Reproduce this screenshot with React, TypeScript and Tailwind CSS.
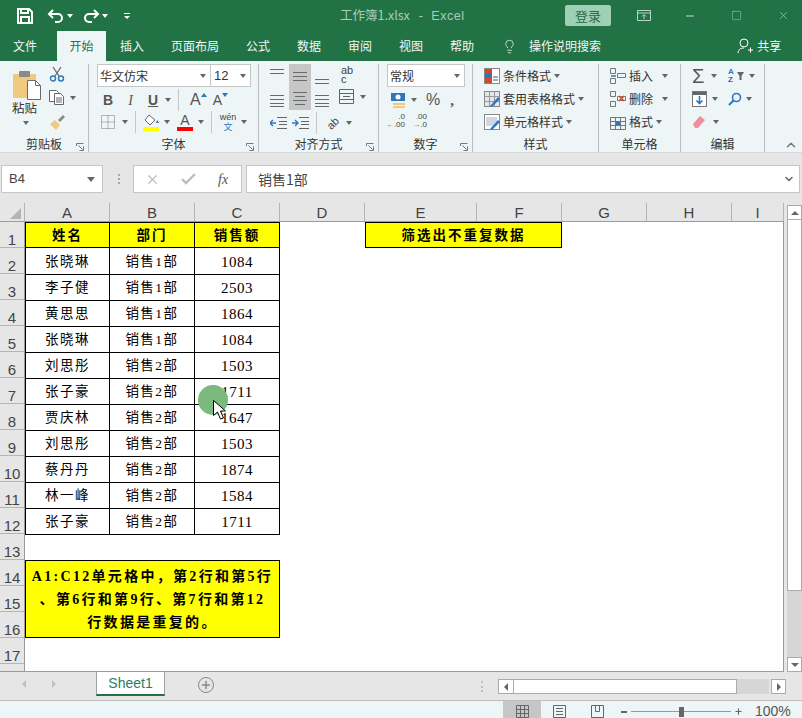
import type { ReactNode } from "react";
import { ChevronUp, ChevronDown, Lightbulb, Minus, Square, X, Plus } from "lucide-react";

const COLS = [
  { id: "A", w: "w-[85px]" },
  { id: "B", w: "w-[85px]" },
  { id: "C", w: "w-[85px]" },
  { id: "D", w: "w-[85px]" },
  { id: "E", w: "w-[112px]" },
  { id: "F", w: "w-[85px]" },
  { id: "G", w: "w-[85px]" },
  { id: "H", w: "w-[85px]" },
  { id: "I", w: "w-[52px]" },
];

const ROWS = [
  ["张晓琳", "销售1部", "1084"],
  ["李子健", "销售1部", "2503"],
  ["黄思思", "销售1部", "1864"],
  ["张晓琳", "销售1部", "1084"],
  ["刘思彤", "销售2部", "1503"],
  ["张子豪", "销售2部", "1711"],
  ["贾庆林", "销售2部", "1647"],
  ["刘思彤", "销售2部", "1503"],
  ["蔡丹丹", "销售2部", "1874"],
  ["林一峰", "销售2部", "1584"],
  ["张子豪", "销售2部", "1711"],
];

const TABS = ["插入", "页面布局", "公式", "数据", "审阅", "视图", "帮助"];

function Caret({ className = "" }: { className?: string }) {
  return (
    <span
      className={`inline-block h-0 w-0 border-x-[3.5px] border-t-[4px] border-x-transparent border-t-[#666] ${className}`}
    />
  );
}

function Group({
  width,
  label,
  launcher,
  children,
}: {
  width: string;
  label: string;
  launcher?: boolean;
  children: ReactNode;
}) {
  return (
    <div className={`relative flex h-[88px] shrink-0 flex-col border-r border-[#b9bcbc] ${width}`}>
      <div className="min-h-0 flex-1">{children}</div>
      <div className="flex h-[19px] items-center justify-center pt-[3px] text-[12px] text-[#333]">{label}</div>
      {launcher && (
        <svg width="8" height="8" viewBox="0 0 8 8" fill="none" stroke="#777" className="absolute bottom-[1px] right-[4px]">
          <path d="M.5 3V.5H7.5M2.5 2.5l4 4M3.5 7.5h4v-4" />
        </svg>
      )}
    </div>
  );
}

function Lines({ rows, w = 14 }: { rows: [number, number][]; w?: number }) {
  return (
    <svg width={w} height="14" viewBox={`0 0 ${w} 14`} stroke="#6a6a6a">
      {rows.map(([x, y], i) => (
        <path key={i} d={`M${x} ${y + 0.5}H${w - x}`} />
      ))}
    </svg>
  );
}

function StyleRow({ icon, label }: { icon: ReactNode; label: string }) {
  return (
    <div className="flex h-[23px] items-center">
      <span className="flex w-[19px] shrink-0">{icon}</span>
      <span className="text-[12px] text-[#333]">{label}</span>
      <Caret className="ml-[3px]" />
    </div>
  );
}

function Ribbon() {
  return (
    <div className="flex h-[93px] border-b border-[#d8dada] bg-[#eef5f6] pt-[3px] text-[#333]">
      {/* 剪贴板 */}
      <Group width="w-[89px]" label="剪贴板" launcher>
        <div className="flex h-full pl-[12px]">
          <div className="flex w-[37px] flex-col items-start">
            <svg width="30" height="32" viewBox="0 0 30 32" className="mt-[5px]">
              <rect x="1" y="5" width="23" height="24" rx="1" fill="#f0c97f" />
              <rect x="7" y="2" width="11" height="6" rx="1" fill="#8a8a8a" />
              <path d="M15.5 11.5h8l5 5v14h-13z" fill="#fff" stroke="#6a6a6a" />
              <path d="M23.5 11.5v5h5" fill="none" stroke="#6a6a6a" />
            </svg>
            <span className="-mt-[1px] text-[12.5px] leading-[15px]">粘贴</span>
            <Caret className="ml-[11px] mt-[6px]" />
          </div>
          <div className="flex flex-col gap-[8px] pt-[2px]">
            <svg width="16" height="16" viewBox="0 0 16 16" fill="none">
              <path d="M4 1l6 9M12 1L6 10" stroke="#6a6a6a" strokeWidth="1.3" />
              <circle cx="4" cy="12.5" r="2.5" stroke="#2f76bd" strokeWidth="1.4" />
              <circle cx="12" cy="12.5" r="2.5" stroke="#2f76bd" strokeWidth="1.4" />
            </svg>
            <div className="flex items-center gap-[5px]">
              <svg width="16" height="15" viewBox="0 0 16 15" fill="#fff" stroke="#666">
                <path d="M.5.5h7l2 2v9h-9z" />
                <path d="M5.5 3.5h6l3 3v8h-9z" />
                <path d="M7 8h6M7 10h6M7 12h6" fill="none" />
              </svg>
              <Caret />
            </div>
            <svg width="17" height="16" viewBox="0 0 17 16" className="mt-[1px]">
              <path d="M1 10l5-4 5 5-4 5z" fill="#f0c97f" />
              <path d="M9 6l5-5 2 2-5 5z" fill="#8a8a8a" />
            </svg>
          </div>
        </div>
      </Group>

      {/* 字体 */}
      <Group width="w-[170px]" label="字体" launcher>
        <div className="pl-[8px]">
          <div className="flex h-[23px] text-[12px]">
            <div className="flex w-[114px] items-center justify-between border border-[#c6c6c6] bg-white pl-[2px] pr-[4px]">
              <span>华文仿宋</span>
              <Caret />
            </div>
            <div className="flex w-[40px] items-center justify-between border border-l-0 border-[#c6c6c6] bg-white pl-[3px] pr-[4px] font-['Liberation_Sans'] text-[13px]">
              <span>12</span>
              <Caret />
            </div>
          </div>
          <div className="mt-[4px] flex h-[18px] items-center text-[14px]">
            <span className="w-[22px] text-center font-['Liberation_Sans'] font-bold text-[#555]">B</span>
            <span className="w-[23px] text-center font-['Liberation_Serif'] italic text-[#555]">I</span>
            <span className="w-[22px] text-center font-['Liberation_Sans'] font-bold text-[#555] underline">U</span>
            <Caret className="ml-[1px]" />
            <span className="ml-[7px] h-[22px] w-px bg-[#c6c6c6]" />
            <span className="ml-[11px] font-['Liberation_Sans'] text-[16px] text-[#555]">A</span>
            <span className="-mt-[10px] h-0 w-0 border-x-[3px] border-b-[4px] border-x-transparent border-b-[#2f76bd]" />
            <span className="ml-[6px] font-['Liberation_Sans'] text-[14px] text-[#555]">A</span>
            <span className="-mt-[10px] h-0 w-0 border-x-[3px] border-t-[4px] border-x-transparent border-t-[#2f76bd]" />
          </div>
          <div className="mt-[3px] flex h-[20px] items-center pl-[4px]">
            <svg width="14" height="14" viewBox="0 0 14 14" stroke="#777" strokeDasharray="1 1" fill="none">
              <path d="M.5.5h13v13H.5zM7 .5v13M.5 7h13" />
            </svg>
            <Caret className="ml-[7px]" />
            <span className="ml-[7px] h-[22px] w-px bg-[#c6c6c6]" />
            <span className="ml-[7px] flex w-[16px] flex-col items-center">
              <svg width="16" height="12" viewBox="0 0 16 12">
                <path d="M6 1l6 5-5 5-5-5z" fill="#fff" stroke="#666" />
                <path d="M14 6l2 3h-3z" fill="#2f76bd" />
              </svg>
              <span className="mt-px h-[4px] w-[16px] bg-[#ffff00]" />
            </span>
            <Caret className="ml-[5px]" />
            <span className="ml-[7px] flex w-[16px] flex-col items-center">
              <span className="font-['Liberation_Sans'] text-[14px] leading-[12px] text-[#555]">A</span>
              <span className="mt-px h-[4px] w-[16px] bg-[#ff0000]" />
            </span>
            <Caret className="ml-[5px]" />
            <span className="ml-[7px] h-[22px] w-px bg-[#c6c6c6]" />
            <span className="ml-[8px] flex w-[16px] flex-col items-center text-[9px] leading-[9px]">
              <span className="font-['Liberation_Sans'] text-[#444]">wén</span>
              <span className="text-[#2f76bd]">文</span>
            </span>
            <Caret className="ml-[5px]" />
          </div>
        </div>
      </Group>

      {/* 对齐方式 */}
      <Group width="w-[120px]" label="对齐方式" launcher>
        <div className="flex pl-[11px]">
          <div className="grid w-[59px] grid-cols-[19px_22px_18px]">
            <div className="flex h-[23px] items-start pt-[4px]"><Lines rows={[[0, 1], [0, 5]]} /></div>
            <div className="row-span-2 flex h-[46px] flex-col items-center bg-[#c6c6c6] pt-[5px]">
              <Lines rows={[[0, 3], [0, 7], [0, 11]]} />
              <span className="h-[8px]" />
              <Lines rows={[[0, 1], [2, 5], [0, 9], [2, 13]]} />
            </div>
            <div className="flex h-[23px] items-end justify-end"><Lines rows={[[0, 6], [0, 10]]} /></div>
            <div className="flex items-start pt-[4px]"><Lines rows={[[0, 1], [0, 5], [0, 9], [0, 12]]} /></div>
            <div className="flex items-start justify-end pt-[4px]"><Lines rows={[[0, 1], [0, 5], [0, 9], [0, 12]]} /></div>
          </div>
          <div className="ml-[10px] flex flex-col items-start">
            <span className="ml-[2px] flex h-[23px] flex-col pt-[2px] font-['Liberation_Sans'] text-[11px] leading-[9px] text-[#444]">
              <span>ab</span>
              <span>c</span>
            </span>
            <span className="mt-[2px] flex items-center gap-[6px]">
              <svg width="15" height="15" viewBox="0 0 15 15" fill="none" stroke="#666">
                <path d="M.5.5h14v14H.5zM.5 4.5h14M.5 10.5h14M4 7.5h7" />
              </svg>
              <Caret />
            </span>
          </div>
        </div>
        <div className="mt-[2px] flex items-center pl-[11px]">
          <svg width="17" height="12" viewBox="0 0 17 12" fill="none" stroke="#666">
            <path d="M7 .5h10M9 4.5h8M9 7.5h8M7 11.5h10" />
            <path d="M0 6h6M3 3L0 6l3 3" stroke="#2f76bd" strokeWidth="1.4" />
          </svg>
          <svg width="17" height="12" viewBox="0 0 17 12" fill="none" stroke="#666" className="ml-[5px]">
            <path d="M7 .5h10M9 4.5h8M9 7.5h8M7 11.5h10" />
            <path d="M0 6h6M3 3l3 3-3 3" stroke="#2f76bd" strokeWidth="1.4" />
          </svg>
          <span className="ml-[7px] h-[22px] w-px bg-[#c6c6c6]" />
          <span className="ml-[7px] flex w-[18px] -rotate-45 justify-center font-['Liberation_Sans'] text-[11px] leading-none text-[#444]">ab</span>
          <Caret className="ml-[4px]" />
        </div>
      </Group>

      {/* 数字 */}
      <Group width="w-[94px]" label="数字" launcher>
        <div className="pl-[8px]">
          <div className="flex h-[23px] w-[78px] items-center justify-between border border-[#c6c6c6] bg-white pl-[2px] pr-[4px] text-[12px]">
            <span>常规</span>
            <Caret />
          </div>
          <div className="mt-[4px] flex h-[18px] items-center pl-[3px]">
            <svg width="16" height="16" viewBox="0 0 16 16">
              <rect x="1" y="1" width="14" height="8" fill="#2f76bd" />
              <circle cx="8" cy="5" r="2.5" fill="#fff" />
              <rect x="3" y="11" width="12" height="2" fill="#f0c97f" />
              <rect x="3" y="14" width="12" height="2" fill="#f0c97f" />
            </svg>
            <Caret className="ml-[5px]" />
            <span className="ml-[9px] font-['Liberation_Sans'] text-[16px] text-[#555]">%</span>
            <span className="ml-[10px] font-['Liberation_Serif'] text-[15px] font-bold text-[#555]">,</span>
          </div>
          <div className="mt-[4px] flex items-center gap-[7px] pl-[3px] font-['Liberation_Sans'] text-[8px] leading-[8px] text-[#444]">
            <span className="flex w-[15px] flex-col items-end">
              <span>.0</span>
              <span><span className="text-[#2f76bd]">←</span>.00</span>
            </span>
            <span className="flex w-[15px] flex-col items-end">
              <span>.00</span>
              <span><span className="text-[#2f76bd]">→</span>.0</span>
            </span>
          </div>
        </div>
      </Group>

      {/* 样式 */}
      <Group width="w-[126px]" label="样式">
        <div className="pl-[11px]">
          <StyleRow
            label="条件格式"
            icon={
              <svg width="16" height="16" viewBox="0 0 16 16">
                <rect x=".5" y=".5" width="15" height="15" fill="#fff" stroke="#888" />
                <rect x="1" y="1" width="7" height="4" fill="#d2492a" />
                <rect x="1" y="5" width="7" height="5" fill="#2f76bd" />
                <rect x="1" y="10" width="7" height="5" fill="#d2492a" />
                <path d="M9 9h5M9 12h5" stroke="#555" />
              </svg>
            }
          />
          <StyleRow
            label="套用表格格式"
            icon={
              <svg width="16" height="16" viewBox="0 0 16 16">
                <rect x=".5" y=".5" width="15" height="15" fill="#e3e6ef" stroke="#888" />
                <path d="M5.5 1v14M10.5 1v14M1 5.5h14M1 10.5h14" stroke="#999" />
                <path d="M6 15l8-9 2 2-8 8z" fill="#2f76bd" />
              </svg>
            }
          />
          <StyleRow
            label="单元格样式"
            icon={
              <svg width="16" height="16" viewBox="0 0 16 16">
                <rect x=".5" y=".5" width="15" height="15" fill="#fff" stroke="#888" />
                <rect x="2" y="3" width="11" height="9" fill="#cfd6e8" />
                <path d="M6 15l8-9 2 2-8 8z" fill="#2f76bd" />
              </svg>
            }
          />
        </div>
      </Group>

      {/* 单元格 */}
      <Group width="w-[82px]" label="单元格">
        <div className="pl-[11px]">
          {["插入", "删除", "格式"].map((label, i) => (
            <div key={label} className="flex h-[23px] items-center">
              <svg width="16" height="16" viewBox="0 0 16 16" fill="none" stroke="#777" className="shrink-0">
                {i === 2 ? (
                  <path d="M.5 3.5h15v12H.5zM5.5 3.5v12M10.5 3.5v12M.5 7.5h15M.5 11.5h15" />
                ) : (
                  <path d="M.5.5h5v5h-5zM.5 10.5h5v5h-5zM7.5 5.5h8v4h-8z" />
                )}
                {i === 0 && <path d="M1 8h5" stroke="#2f76bd" strokeWidth="1.5" />}
                {i === 1 && <path d="M9 5l5 5M14 5l-5 5" stroke="#d2492a" strokeWidth="1.5" />}
                {i === 2 && <rect x="6" y="8" width="4" height="3" fill="#2f76bd" stroke="none" />}
              </svg>
              <span className="ml-[3px] text-[12px]">{label}</span>
              <Caret className={i === 2 ? "ml-[3px]" : "ml-[9px]"} />
            </div>
          ))}
        </div>
      </Group>

      {/* 编辑 */}
      <Group width="w-[84px]" label="编辑">
        <div className="grid grid-cols-[36px_auto] pl-[11px]">
          <div className="flex h-[23px] items-center gap-[7px]">
            <span className="font-['Liberation_Sans'] text-[20px] leading-none text-[#555]">Σ</span>
            <Caret />
          </div>
          <div className="flex h-[23px] items-center gap-[3px]">
            <span className="flex flex-col font-['Liberation_Sans'] text-[8px] font-bold leading-[8px]">
              <span className="text-[#2f76bd]">A</span>
              <span className="text-[#7b3fa8]">Z</span>
            </span>
            <svg width="7" height="8" viewBox="0 0 7 8"><path d="M0 0h7L4.5 4v4h-2V4z" fill="#666" /></svg>
            <Caret className="ml-[2px]" />
          </div>
          <div className="flex h-[23px] items-center gap-[5px]">
            <svg width="15" height="16" viewBox="0 0 15 16">
              <rect x=".5" y=".5" width="14" height="15" fill="#fff" stroke="#777" />
              <rect x="1" y="1" width="13" height="3" fill="#666" />
              <path d="M7.5 5v7M4.5 9.5l3 3 3-3" fill="none" stroke="#2f76bd" strokeWidth="1.6" />
            </svg>
            <Caret />
          </div>
          <div className="flex h-[23px] items-center gap-[4px]">
            <svg width="14" height="14" viewBox="0 0 14 14" fill="none" stroke="#2f76bd" strokeWidth="1.6">
              <circle cx="8.5" cy="5.5" r="4" />
              <path d="M5.5 8.5L1 13" strokeWidth="2" />
            </svg>
            <Caret />
          </div>
          <div className="flex h-[23px] items-center gap-[7px]">
            <svg width="14" height="14" viewBox="0 0 14 14">
              <path d="M1 9l7-8 5 4-7 8H3z" fill="#ee8f9e" />
            </svg>
            <Caret />
          </div>
        </div>
      </Group>

      <div className="flex flex-1 items-end justify-end pr-[4px]">
        <ChevronUp size={14} strokeWidth={2.5} className="text-[#777]" />
      </div>
    </div>
  );
}

function Sheet() {
  const bordered = "border-b border-r border-black";
  return (
    <div className="flex h-[469px] shrink-0">
      <div className="flex min-w-0 flex-1 flex-col">
        {/* 列标 */}
        <div className="flex h-[19px] shrink-0 border-b border-[#9b9b9b] bg-[#e6e6e6] font-['Liberation_Sans'] text-[15px] text-[#444]">
          <div className="flex w-[25px] items-end justify-end border-r border-[#b5b5b5] pb-[2px] pr-[3px]">
            <span className="h-0 w-0 border-b-[11px] border-l-[11px] border-b-[#b4b4b4] border-l-transparent" />
          </div>
          {COLS.map((c) => (
            <div key={c.id} className={`flex items-center justify-center border-r border-[#b5b5b5] pt-[3px] ${c.w}`}>
              {c.id}
            </div>
          ))}
        </div>
        <div className="flex min-h-0 flex-1 border-b border-[#9b9b9b]">
          {/* 行号 */}
          <div className="w-[25px] shrink-0 overflow-hidden border-r border-[#9b9b9b] bg-[#e6e6e6] font-['Liberation_Sans'] text-[15px] leading-[15px] text-[#444]">
            {Array.from({ length: 17 }, (_, i) => (
              <div key={i} className="flex h-[26px] items-end justify-center border-b border-[#b5b5b5]">
                {i + 1}
              </div>
            ))}
          </div>
          {/* 单元格 */}
          <div className="grid min-w-0 flex-1 auto-rows-[26px] grid-cols-[85px_85px_85px_85px_112px_85px_85px_85px_51px] content-start overflow-hidden border-r border-[#9b9b9b] bg-white font-['Liberation_Serif','Noto_Sans_CJK_SC',serif] text-[13.5px] text-black">
            {["姓名", "部门", "销售额"].map((t, i) => (
              <div
                key={t}
                className={`flex items-center justify-center border-y border-r border-black bg-[#ffff00] pt-[2px] font-bold tracking-[2px] ${i === 0 ? "border-l" : ""}`}
              >
                {t}
              </div>
            ))}
            <div />
            <div className="col-span-2 flex items-center justify-center border border-black bg-[#ffff00] pt-[2px] font-bold tracking-[2px]">
              筛选出不重复数据
            </div>
            <div className="col-span-3" />
            {ROWS.map((row, r) => (
              <div key={r} className="col-span-full grid grid-cols-subgrid">
                {row.map((v, c) => (
                  <div
                    key={c}
                    className={`flex items-center justify-center pt-[3px] ${c === 2 ? "text-[15px] tracking-[0.5px]" : "tracking-[1.5px]"} ${bordered} ${c === 0 ? "border-l" : ""}`}
                  >
                    {v}
                  </div>
                ))}
              </div>
            ))}
            <div className="col-span-full" />
            <div className="col-span-3 row-span-3 flex flex-col items-center justify-center whitespace-nowrap border border-black bg-[#ffff00] pt-[1px] text-[14px] font-bold leading-[23px] tracking-[2.3px]">
              <span>A1:C12单元格中，第2行和第5行</span>
              <span>、第6行和第9行、第7行和第12</span>
              <span>行数据是重复的。</span>
            </div>
          </div>
        </div>
      </div>
      {/* 竖向滚动条 */}
      <div className="flex w-[18px] shrink-0 flex-col bg-[#e6e6e6] pl-[3px] pt-[2px]">
        <div className="flex h-[15px] items-center justify-center border border-[#ababab] bg-white">
          <span className="h-0 w-0 border-x-[4px] border-b-[4px] border-x-transparent border-b-[#666]" />
        </div>
        <div className="h-[371px] border-x border-b border-[#ababab] bg-white" />
        <div className="flex-1 bg-[#d6d6d8]" />
        <div className="flex h-[15px] items-center justify-center border border-[#ababab] bg-white">
          <span className="h-0 w-0 border-x-[4px] border-t-[4px] border-x-transparent border-t-[#666]" />
        </div>
      </div>
    </div>
  );
}

export default function App() {
  return (
    <div className="relative flex h-[718px] w-[802px] flex-col overflow-hidden bg-[#e6e6e6] font-['Noto_Sans_CJK_SC',sans-serif] text-[13px]">
      {/* 标题栏 */}
      <div className="flex h-[31px] shrink-0 items-center bg-[#217346] text-white">
        <div className="flex w-[340px] items-center pl-[17px]">
          <svg width="16" height="16" viewBox="0 0 16 16" fill="none" stroke="#fff" strokeWidth="2">
            <path d="M1 1h11l3 3v11H1zM4 1v4h7V1M4 15V9h8v6" />
          </svg>
          <svg width="18" height="14" viewBox="0 0 18 14" fill="none" stroke="#fff" strokeWidth="2" className="ml-[14px]">
            <path d="M6 1L2 5l4 4M2 5h9a4 4 0 0 1 0 8H8" />
          </svg>
          <Caret className="ml-[2px] border-t-white" />
          <svg width="18" height="14" viewBox="0 0 18 14" fill="none" stroke="#fff" strokeWidth="2" className="ml-[9px]">
            <path d="M12 1l4 4-4 4M16 5H7a4 4 0 0 0 0 8h3" />
          </svg>
          <Caret className="ml-[2px] border-t-white" />
          <svg width="8" height="8" viewBox="0 0 8 8" stroke="#fff" className="ml-[15px]">
            <path d="M1 1.5h6" />
            <path d="M1 4h6l-3 3z" fill="#fff" stroke="none" />
          </svg>
        </div>
        <div className="w-[225px] text-[12.5px] text-[#a9cdb9]">
          工作簿1.xlsx<span className="ml-[5px] font-['Liberation_Sans'] tracking-[0.5px]"> - &nbsp;Excel</span>
        </div>
        <div className="flex h-[21px] w-[46px] items-center justify-center rounded-[2px] bg-[#9fcfb5] text-[#26693f]">
          登录
        </div>
        <svg width="14" height="12" viewBox="0 0 14 12" fill="none" stroke="#b9d6c6" className="ml-[26px]">
          <path d="M.5.5h13v10H.5zM.5 3h13M7 9V5M5 6.5l2-2 2 2" />
        </svg>
        <Minus size={12} className="ml-[33px] text-[#c4dccf]" />
        <Square size={11} strokeWidth={1} className="ml-[35px] text-[#c4dccf]" />
        <X size={13} strokeWidth={1} className="ml-[35px] text-[#c4dccf]" />
      </div>

      {/* 选项卡 */}
      <div className="flex h-[30px] shrink-0 items-stretch bg-[#217346] text-[12px] text-[#f3f8f5]">
        <span className="flex w-[57px] items-center pl-[13px]">文件</span>
        <span className="mr-[14px] flex w-[49px] items-center justify-center bg-[#eef5f6] text-[#217346]">开始</span>
        <div className="flex items-center gap-[27px]">
          {TABS.map((t) => (
            <span key={t}>{t}</span>
          ))}
        </div>
        <Lightbulb size={15} strokeWidth={1.2} className="ml-[28px] self-center" />
        <span className="ml-[12px] self-center">操作说明搜索</span>
        <svg width="16" height="16" viewBox="0 0 16 16" fill="none" stroke="#fff" className="ml-[136px] self-center">
          <circle cx="7" cy="5" r="4" />
          <path d="M1 15c.5-4 3-5 6-5M11 12h5M13.5 9.5v5" />
        </svg>
        <span className="ml-[4px] self-center">共享</span>
      </div>

      <Ribbon />

      {/* 编辑栏 */}
      <div className="flex h-[50px] shrink-0 pr-[2px] pt-[12px]">
        <div className="ml-[1px] flex h-[28px] w-[102px] items-center justify-between border border-[#c6c6c6] bg-white pl-[7px] pr-[7px] font-['Liberation_Sans'] text-[#444]">
          <span>B4</span>
          <Caret className="border-x-[4px] border-t-[5px]" />
        </div>
        <div className="ml-[14px] flex h-[28px] w-[3px] flex-col items-center justify-center gap-[2px]">
          <span className="h-[2px] w-[2px] bg-[#aaa]" />
          <span className="h-[2px] w-[2px] bg-[#aaa]" />
          <span className="h-[2px] w-[2px] bg-[#aaa]" />
        </div>
        <div className="ml-[13px] flex h-[28px] w-[109px] items-center border border-[#c6c6c6] bg-white pl-[11px] text-[#bdbdbd]">
          <X size={15} strokeWidth={2} />
          <svg width="15" height="12" viewBox="0 0 15 12" fill="none" stroke="#bdbdbd" strokeWidth="2.4" className="ml-[21px]">
            <path d="M1 6l4 4 9-9" />
          </svg>
          <span className="ml-[22px] font-['Liberation_Serif'] text-[14px] italic text-[#555]">fx</span>
        </div>
        <div className="ml-[4px] flex h-[28px] flex-1 items-center justify-between border border-[#c6c6c6] bg-white pl-[11px] pr-[4px] text-[14px] text-[#444]">
          <span>销售1部</span>
          <ChevronDown size={12} strokeWidth={3} className="text-[#666]" />
        </div>
      </div>

      <Sheet />

      {/* 工作表标签 + 横向滚动条 */}
      <div className="flex h-[29px] shrink-0 border-b border-[#bdbdbd] bg-[#e6e6e6]">
        <div className="flex w-[96px] items-center pl-[22px] pb-[4px]">
          <span className="h-0 w-0 border-y-[4px] border-r-[4px] border-y-transparent border-r-[#c0c0c0]" />
          <span className="ml-[26px] h-0 w-0 border-y-[4px] border-l-[4px] border-y-transparent border-l-[#c0c0c0]" />
        </div>
        <div className="flex h-[24px] w-[69px] items-center justify-center border-x border-b-2 border-x-[#a0a0a0] border-b-[#217346] bg-white font-['Liberation_Sans'] text-[14px] text-[#2d7a6a]">
          Sheet1
        </div>
        <div className="ml-[33px] mt-[5px] flex h-[16px] w-[16px] items-center justify-center rounded-full border border-[#888] text-[#888]">
          <Plus size={12} strokeWidth={3} />
        </div>
        <div className="ml-[267px] mt-[9px] flex h-[11px] w-[3px] flex-col justify-between">
          <span className="h-[2px] w-[2px] bg-[#c0c0c0]" />
          <span className="h-[2px] w-[2px] bg-[#c0c0c0]" />
          <span className="h-[2px] w-[2px] bg-[#c0c0c0]" />
        </div>
        <div className="ml-[14px] mt-[7px] flex h-[15px] w-[288px]">
          <div className="flex w-[16px] items-center justify-center border border-[#ababab] bg-white">
            <span className="h-0 w-0 border-y-[4px] border-r-[4px] border-y-transparent border-r-[#666]" />
          </div>
          <div className="w-[223px] border-y border-r border-[#ababab] bg-white" />
          <div className="flex-1 bg-[#d6d6d8]" />
          <div className="ml-[2px] flex w-[15px] items-center justify-center border border-[#ababab] bg-white">
            <span className="h-0 w-0 border-y-[4px] border-l-[4px] border-y-transparent border-l-[#666]" />
          </div>
        </div>
      </div>

      {/* 状态栏 */}
      <div className="flex flex-1 items-center bg-[#eef5f6] text-[#555]">
        <div className="ml-[503px] flex h-full w-[38px] items-center justify-center bg-[#c6c6c6]">
          <svg width="13" height="13" viewBox="0 0 13 13" fill="none" stroke="#666">
            <path d="M.5.5h12v12H.5zM4.5.5v12M8.5.5v12M.5 4.5h12M.5 8.5h12" />
          </svg>
        </div>
        <svg width="13" height="13" viewBox="0 0 13 13" fill="none" stroke="#666" className="ml-[12px]">
          <path d="M.5.5h12v12H.5zM3 3.5h7M3 6.5h7M3 9.5h7" />
        </svg>
        <svg width="13" height="13" viewBox="0 0 13 13" fill="none" stroke="#666" className="ml-[25px]">
          <path d="M.5.5h12v12H.5zM4.5.5v6h4v-6" />
        </svg>
        <span className="ml-[17px] h-[2px] w-[6px] bg-[#666]" />
        <div className="ml-[4px] flex h-px w-[100px] items-center justify-center bg-[#999]">
          <span className="h-[10px] w-[5px] bg-[#666]" />
        </div>
        <Plus size={9} strokeWidth={3} className="ml-[3px] text-[#666]" />
        <span className="ml-[12px] font-['Liberation_Sans'] text-[14px]">100%</span>
      </div>

      {/* 录屏时的鼠标指针 */}
      <div className="absolute left-[198px] top-[385px] h-[30px] w-[30px] rounded-full bg-[#7cb97c]" />
      <svg width="15" height="21" viewBox="0 0 15 21" className="absolute left-[213px] top-[400px]">
        <path d="M.5.5v15l4-3.5 3 7 3-1-3-7h5z" fill="#fff" stroke="#000" />
      </svg>
    </div>
  );
}
